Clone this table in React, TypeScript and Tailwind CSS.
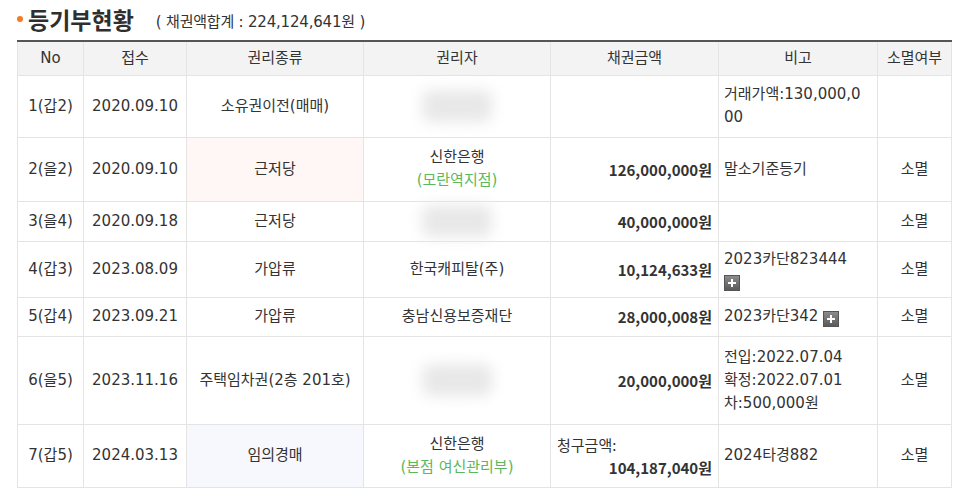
import React from "react";

const font = { fontFamily: '"DejaVu Sans", "Noto Sans CJK KR", sans-serif' };
const cjk = { fontFamily: '"Noto Sans CJK KR", "Noto Sans", sans-serif' };

function Blur() {
  return (
    <div className="mx-auto w-[70px] h-[32px] rounded-lg bg-[#e8e8e8] blur-[7px]" />
  );
}

function Plus() {
  return (
    <span className="inline-flex items-center justify-center w-[16px] h-[16px] align-[-3px] bg-gradient-to-b from-[#8c8c8c] to-[#5a5a5a] border border-[#555]">
      <svg width="10" height="10" viewBox="0 0 10 10">
        <rect x="4" y="1" width="2" height="8" fill="#fff" />
        <rect x="1" y="4" width="8" height="2" fill="#fff" />
      </svg>
    </span>
  );
}

const rows = [
  { h: "h-[62px]", no: "1(갑2)", date: "2020.09.10", kind: "소유권이전(매매)", who: <Blur />, amt: null, note: "거래가액:130,000,000", end: "" },
  { h: "h-[64px]", no: "2(을2)", date: "2020.09.10", kind: "근저당", kindBg: "bg-[#fff6f6]", who: <><div>신한은행</div><div className="text-[#5cb85c]">(모란역지점)</div></>, amt: "126,000,000원", note: "말소기준등기", end: "소멸" },
  { h: "h-[40px]", no: "3(을4)", date: "2020.09.18", kind: "근저당", who: <Blur />, amt: "40,000,000원", note: "", end: "소멸" },
  { h: "h-[56px]", no: "4(갑3)", date: "2023.08.09", kind: "가압류", who: "한국캐피탈(주)", amt: "10,124,633원", note: <><div>2023카단823444</div><div className="leading-[18px]"><Plus /></div></>, end: "소멸" },
  { h: "h-[39px]", no: "5(갑4)", date: "2023.09.21", kind: "가압류", who: "충남신용보증재단", amt: "28,000,008원", note: <>2023카단342 <Plus /></>, end: "소멸" },
  { h: "h-[88px]", no: "6(을5)", date: "2023.11.16", kind: "주택임차권(2층 201호)", who: <Blur />, amt: "20,000,000원", note: <><div>전입:2022.07.04</div><div>확정:2022.07.01</div><div>차:500,000원</div></>, end: "소멸" },
  { h: "h-[63px]", no: "7(갑5)", date: "2024.03.13", kind: "임의경매", kindBg: "bg-[#f7f7fe]", who: <><div>신한은행</div><div className="text-[#5cb85c]">(본점 여신관리부)</div></>, amt: <><div className="text-left font-normal">청구금액:</div><div>104,187,040원</div></>, note: "2024타경882", end: "소멸" },
];

export default function App() {
  return (
    <div className="w-[966px] h-[504px] bg-white text-[#333] overflow-hidden" style={font}>
      <div className="pl-[17px] pt-[5px] flex items-end gap-[22px] h-[34px]">
        <div className="flex items-center gap-[5px]">
          <span className="w-[6px] h-[6px] rounded-full bg-[#f47a24]" />
          <span className="text-[23px] font-bold leading-[30px] text-[#2f2f2f]" style={cjk}>등기부현황</span>
        </div>
        <span className="text-[15px] leading-[24px] text-[#333] tracking-[-0.2px]">( 채권액합계 : 224,124,641원 )</span>
      </div>
      <table className="ml-[17px] mt-[6px] w-[934px] table-fixed border-collapse text-[15px] leading-[23px]">
        <colgroup>
          <col className="w-[66px]" />
          <col className="w-[103px]" />
          <col className="w-[177px]" />
          <col className="w-[187px]" />
          <col className="w-[168px]" />
          <col className="w-[159px]" />
          <col className="w-[74px]" />
        </colgroup>
        <thead>
          <tr className="h-[34px] bg-[#f3f3f3] border-t-2 border-t-[#555]">
            {["No", "접수", "권리종류", "권리자", "채권금액", "비고", "소멸여부"].map((t) => (
              <th key={t} className="font-normal text-center border border-[#e4e4e4] border-t-[#555] p-0">{t}</th>
            ))}
          </tr>
        </thead>
        <tbody>
          {rows.map((r) => (
            <tr key={r.no} className={r.h}>
              <td className="text-center border border-[#e4e4e4] px-1">{r.no}</td>
              <td className="text-center border border-[#e4e4e4] px-1">{r.date}</td>
              <td className={`text-center border border-[#e4e4e4] px-1 ${r.kindBg ?? ""}`}>{r.kind}</td>
              <td className="text-center border border-[#e4e4e4] px-1">{r.who}</td>
              <td className="text-right font-semibold border border-[#e4e4e4] pl-[6px] pr-[6px]" style={cjk}>{r.amt}</td>
              <td className="text-left border border-[#e4e4e4] pl-[5px] pr-[12px] break-all">{r.note}</td>
              <td className="text-center border border-[#e4e4e4] px-1">{r.end}</td>
            </tr>
          ))}
        </tbody>
      </table>
    </div>
  );
}
